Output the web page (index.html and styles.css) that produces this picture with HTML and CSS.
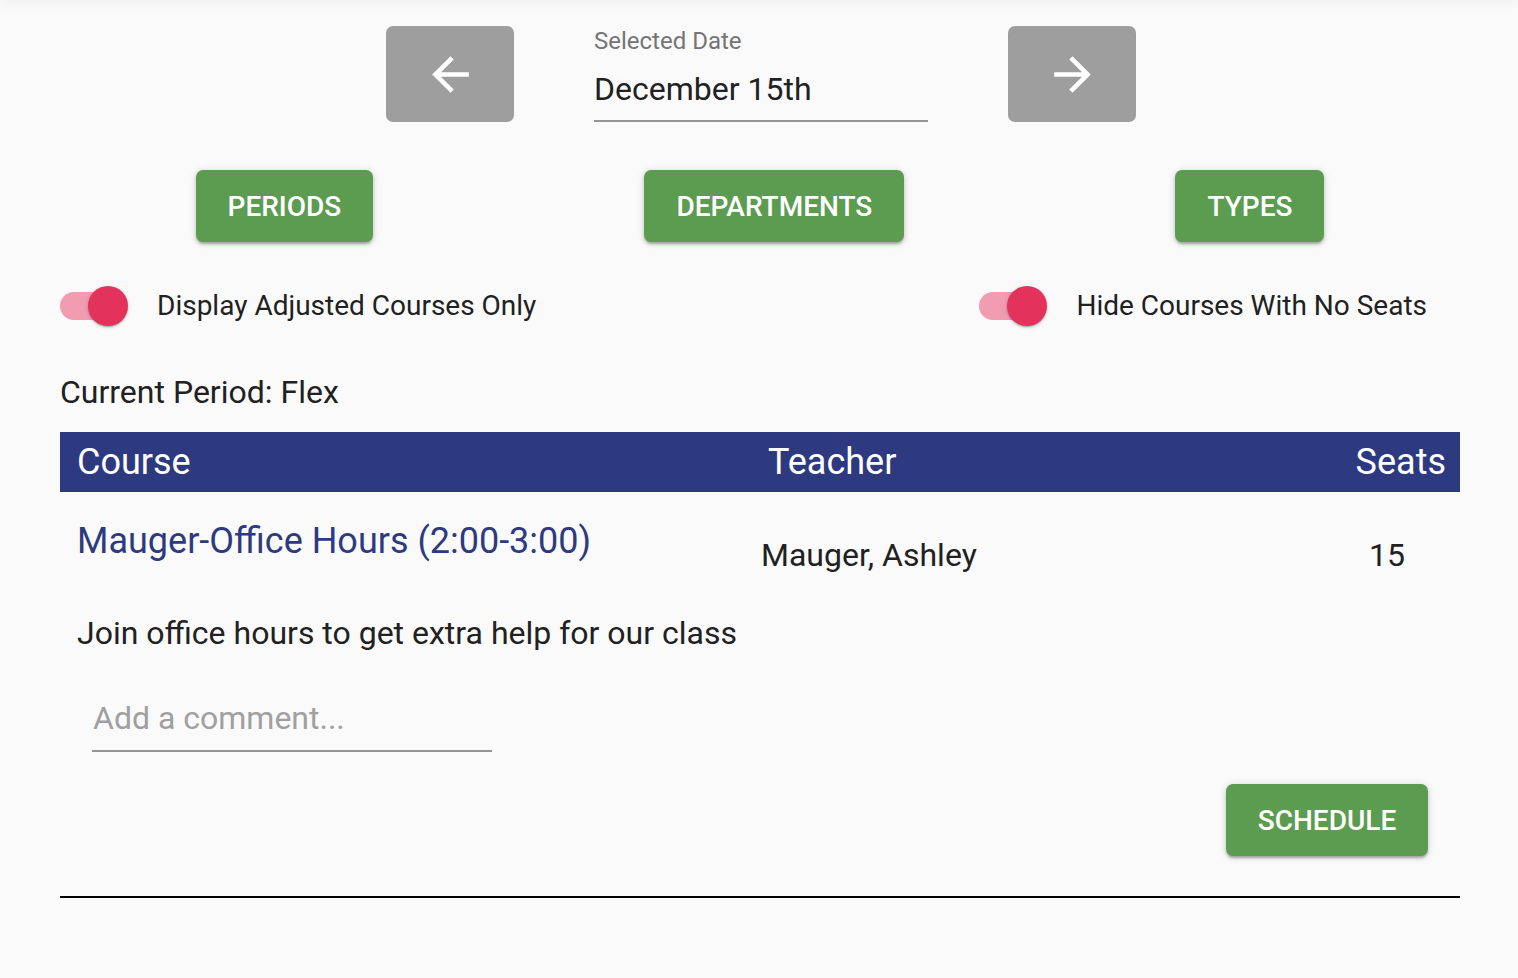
FILE: index.html
```html
<!DOCTYPE html>
<html>
<head>
<meta charset="utf-8">
<link rel="stylesheet" href="styles.css">
</head>
<body>
<div class="topshade"></div>
<main class="page">
  <section class="date-row">
    <button class="nav-btn" aria-label="Previous day">
      <svg viewBox="0 0 24 24" width="55" height="55"><path fill="#fff" d="M20 11H7.83l5.59-5.59L12 4l-8 8 8 8 1.41-1.41L7.83 13H20v-2z"/></svg>
    </button>
    <div class="date-field">
      <div class="date-label">Selected Date</div>
      <div class="date-value">December 15th</div>
    </div>
    <button class="nav-btn" aria-label="Next day">
      <svg viewBox="0 0 24 24" width="55" height="55"><path fill="#fff" d="M12 4l-1.41 1.41L16.17 11H4v2h12.17l-5.58 5.59L12 20l8-8z"/></svg>
    </button>
  </section>

  <section class="filter-row">
    <button class="green-btn">Periods</button>
    <button class="green-btn">Departments</button>
    <button class="green-btn">Types</button>
  </section>

  <section class="toggle-row">
    <label class="toggle">
      <span class="switch"><span class="track"></span><span class="thumb"></span></span>
      <span class="toggle-text">Display Adjusted Courses Only</span>
    </label>
    <label class="toggle">
      <span class="switch"><span class="track"></span><span class="thumb"></span></span>
      <span class="toggle-text">Hide Courses With No Seats</span>
    </label>
  </section>

  <div class="period">Current Period: Flex</div>

  <div class="table-head">
    <div class="th th-course">Course</div>
    <div class="th th-teacher">Teacher</div>
    <div class="th th-seats">Seats</div>
  </div>

  <div class="course-row">
    <div class="course-title">Mauger-Office Hours (2:00-3:00)</div>
    <div class="course-teacher">Mauger, Ashley</div>
    <div class="course-seats">15</div>
  </div>
  <div class="course-desc">Join office hours to get extra help for our class</div>
  <div class="comment">
    <input class="comment-input" type="text" placeholder="Add a comment...">
  </div>
  <div class="schedule-row">
    <button class="green-btn schedule-btn">Schedule</button>
  </div>
  <hr class="divider">
</main>
</body>
</html>
```

FILE: styles.css
```css
* { box-sizing: border-box; }
html, body { margin: 0; padding: 0; }
body {
  background: #fafafa;
  font-family: Roboto, "Liberation Sans", Arial, sans-serif;
  color: #212121;
  width: 1518px;
  min-height: 978px;
}
.topshade {
  height: 0;
  box-shadow: 0 1px 8px 2px rgba(0,0,0,0.07);
}
.page {
  width: 1400px;
  margin-left: 60px;
}
button { font-family: inherit; }

.date-row {
  display: flex;
  justify-content: center;
  align-items: flex-start;
  gap: 80px;
  padding-top: 26px;
  padding-left: 2px;
}
.nav-btn {
  width: 128px;
  height: 96px;
  border: none;
  border-radius: 7px;
  background: #9e9e9e;
  display: flex;
  align-items: center;
  justify-content: center;
  padding: 0;
}
.nav-btn svg { display: block; }
.date-field {
  width: 334px;
  margin-top: 1px;
  border-bottom: 2px solid #949494;
}
.date-label {
  font-size: 24px;
  line-height: 28px;
  color: #757575;
}
.date-value {
  font-size: 32px;
  line-height: 36px;
  padding-top: 16px;
  padding-bottom: 13px;
  color: #212121;
}

.filter-row {
  display: flex;
  justify-content: space-around;
  margin-top: 48px;
}
.green-btn {
  height: 72px;
  padding: 0 32px;
  border: none;
  border-radius: 7px;
  background: #5c9c50;
  color: #fff;
  font-size: 28px;
  font-weight: 500;
  text-transform: uppercase;
  letter-spacing: 0;
  box-shadow: 0 3px 2px -1px rgba(0,0,0,0.2), 0 2px 4px 0 rgba(0,0,0,0.14), 0 1px 8px 0 rgba(0,0,0,0.12);
}

.toggle-row {
  display: flex;
  justify-content: space-between;
  padding-right: 33px;
  margin-top: 44px;
  height: 40px;
}
.toggle {
  display: flex;
  align-items: center;
  gap: 29px;
}
.switch {
  position: relative;
  width: 68px;
  height: 40px;
}
.track {
  position: absolute;
  left: 0;
  top: 6px;
  width: 62px;
  height: 28px;
  border-radius: 14px;
  background: #f19cb1;
}
.thumb {
  position: absolute;
  left: 28px;
  top: 0;
  width: 40px;
  height: 40px;
  border-radius: 50%;
  background: #e3325c;
  box-shadow: 0 2px 2px -1px rgba(0,0,0,0.2), 0 1px 2px 0 rgba(0,0,0,0.14), 0 1px 5px 0 rgba(0,0,0,0.12);
}
.toggle-text {
  font-size: 28px;
  line-height: 40px;
  color: #212121;
}

.period {
  margin-top: 48px;
  font-size: 32px;
  line-height: 36px;
}

.table-head {
  margin-top: 22px;
  height: 60px;
  background: #2d3a80;
  color: #fff;
  display: grid;
  grid-template-columns: 691px 1fr auto;
  align-items: center;
  padding: 0 14px 0 17px;
}
.th {
  font-size: 36px;
  line-height: 40px;
}

.course-row {
  display: grid;
  grid-template-columns: 684px 1fr 120px;
  padding-left: 17px;
  padding-right: 13px;
  margin-top: 28px;
  height: 42px;
}
.course-title {
  font-size: 36px;
  line-height: 42px;
  color: #2d3a80;
}
.course-teacher, .course-seats {
  font-size: 32px;
  line-height: 36px;
  padding-top: 17px;
}
.course-seats { text-align: center; }

.course-desc {
  margin-top: 53px;
  padding-left: 17px;
  font-size: 32px;
  line-height: 36px;
}

.comment {
  margin-top: 47px;
  padding-left: 32px;
}
.comment-input {
  width: 400px;
  height: 54px;
  border: none;
  border-bottom: 2px solid #949494;
  background: transparent;
  font-family: inherit;
  font-size: 32px;
  padding: 0 0 12px 1px;
  color: #212121;
  outline: none;
}
.comment-input::placeholder { color: #a0a0a0; opacity: 1; }

.schedule-row {
  display: flex;
  justify-content: flex-end;
  padding-right: 32px;
  margin-top: 32px;
}
.schedule-btn { width: 202px; padding: 0; }

.divider {
  margin: 40px 0 0 0;
  border: none;
  border-top: 2px solid #000;
  height: 0;
}
```
